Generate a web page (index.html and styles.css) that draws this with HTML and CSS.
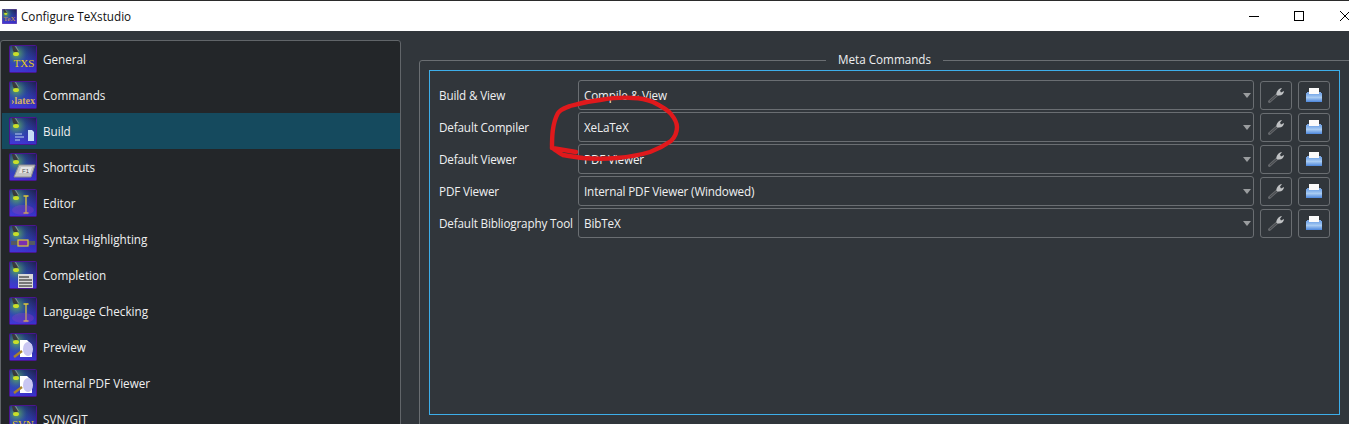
FILE: index.html
```html
<!DOCTYPE html>
<html lang="en">
<head>
    <meta charset="UTF-8">
    <meta name="viewport" content="width=device-width, initial-scale=1.0">
    <title>Configure TeXstudio</title>
    <link rel="stylesheet" href="styles.css">
</head>
<body>
    <svg class="defs" width="0" height="0">
        <defs>
            <linearGradient id="tile" x1="0.6" y1="0" x2="0.4" y2="1">
                <stop offset="0" stop-color="#14204a"/>
                <stop offset="0.5" stop-color="#2330a0"/>
                <stop offset="1" stop-color="#3a34dc"/>
            </linearGradient>
            <radialGradient id="beam" cx="0.25" cy="0.3" r="0.8">
                <stop offset="0" stop-color="#6fd04a" stop-opacity="0.8"/>
                <stop offset="0.5" stop-color="#3a70b0" stop-opacity="0.35"/>
                <stop offset="1" stop-color="#7030c0" stop-opacity="0.1"/>
            </radialGradient>
            <linearGradient id="tray" x1="0" y1="0" x2="0" y2="1">
                <stop offset="0" stop-color="#6a9fe6"/>
                <stop offset="0.5" stop-color="#a8cbf2"/>
                <stop offset="1" stop-color="#4c86dc"/>
            </linearGradient>
            <symbol id="tile-base" viewBox="0 0 28 28">
                <rect x="0.5" y="0.5" width="27" height="27" rx="1" fill="url(#tile)" stroke="#4a1590"/>
                <rect x="1" y="1" width="26" height="26" fill="url(#beam)"/>
                <path d="M3 1 L5 1 L9 6 L7 9 L4 6 Z" fill="#3a3a3a"/>
                <path d="M6.5 1 L9.5 6" stroke="#8a8a8a"/>
                <ellipse cx="7" cy="9" rx="3" ry="2" fill="#c8e02a"/>
            </symbol>
            <symbol id="paper-lens" viewBox="0 0 28 28">
                <path d="M11 7 H18 L23 12 V24 H11 Z" fill="#fff"/>
                <ellipse cx="19" cy="16" rx="5" ry="7" fill="#c9c6f2"/>
                <path d="M5 24 L13 18" stroke="#a8832a" stroke-width="2.4"/>
            </symbol>
            <symbol id="ibeam" viewBox="0 0 28 28">
                <path d="M17 7 V24 M14.5 7 H19.5 M14.5 24 H19.5" stroke="#dcc83a" stroke-width="1.3" fill="none"/>
                <ellipse cx="14" cy="21" rx="11" ry="5" fill="#a040c0" opacity="0.3"/>
            </symbol>
            <symbol id="wrench" viewBox="0 0 16 16">
                <path d="M1.5 14.5 L10 7" stroke="#63666a" stroke-width="3" stroke-linecap="round"/>
                <path d="M2 14 L9.5 7.5" stroke="#3a3d40" stroke-width="0.8"/>
                <path d="M8.5 8 C8 4.5 10.5 1.5 14 1 L12 3.8 L13 5.5 L16 4 C16 7.5 12.5 9.5 8.5 8 Z" fill="#bfc1c3"/>
            </symbol>
            <symbol id="save" viewBox="0 0 16 14">
                <rect x="0" y="5" width="16" height="9" fill="url(#tray)"/>
                <rect x="1" y="4" width="14" height="2" fill="#7ea8e2"/>
                <rect x="3" y="0" width="10" height="6" fill="#fbfbfb"/>
            </symbol>
        </defs>
    </svg>

    <header class="titlebar">
        <svg class="app-icon" viewBox="0 0 28 28">
            <use href="#tile-base"/>
            <text x="14" y="23" class="tile-text tile-text-lg">TeX</text>
        </svg>
        <span class="title">Configure TeXstudio</span>
        <div class="window-controls">
            <svg width="10" height="10" viewBox="0 0 10 10"><path d="M0 5.5 H10" stroke="#000"/></svg>
            <svg width="10" height="10" viewBox="0 0 10 10"><rect x="0.5" y="0.5" width="9" height="9" fill="none" stroke="#000"/></svg>
            <svg width="10" height="10" viewBox="0 0 10 10"><path d="M0 0 L10 10 M10 0 L0 10" stroke="#000"/></svg>
        </div>
    </header>

    <main class="dialog">
        <ul class="nav">
            <li class="nav-item">
                <svg class="nav-icon" viewBox="0 0 28 28"><use href="#tile-base"/><text x="15" y="22" class="tile-text">TXS</text></svg>
                General
            </li>
            <li class="nav-item">
                <svg class="nav-icon" viewBox="0 0 28 28"><use href="#tile-base"/><text x="14" y="23" class="tile-text tile-text-sm">›latex</text></svg>
                Commands
            </li>
            <li class="nav-item active">
                <svg class="nav-icon" viewBox="0 0 28 28">
                    <use href="#tile-base"/>
                    <path d="M6 17 H13 M6 20 H15 M6 23 H11" stroke="#8ea2dc" stroke-width="1.5"/>
                    <path d="M19 13 H23 L25 15 V24 H19 Z" fill="#c6dcf6"/>
                </svg>
                Build
            </li>
            <li class="nav-item">
                <svg class="nav-icon" viewBox="0 0 28 28">
                    <use href="#tile-base"/>
                    <path d="M10 12 H26 L22 24 H5 Z" fill="#c4c4c4" stroke="#8d8d8d"/>
                    <path d="M12 14 H23 L21 20 H10 Z" fill="#e4e4e4"/>
                    <text x="16.5" y="19.5" class="tile-text tile-key">F1</text>
                </svg>
                Shortcuts
            </li>
            <li class="nav-item">
                <svg class="nav-icon" viewBox="0 0 28 28"><use href="#tile-base"/><use href="#ibeam"/></svg>
                Editor
            </li>
            <li class="nav-item">
                <svg class="nav-icon" viewBox="0 0 28 28">
                    <use href="#tile-base"/>
                    <rect x="2" y="16" width="24" height="4" fill="#555a60"/>
                    <rect x="9" y="15" width="10" height="6" fill="#7a2fb0" stroke="#dcc83a" stroke-width="1.2"/>
                </svg>
                Syntax Highlighting
            </li>
            <li class="nav-item">
                <svg class="nav-icon" viewBox="0 0 28 28">
                    <use href="#tile-base"/>
                    <rect x="9" y="13" width="15" height="14" fill="#d9d9d9"/>
                    <path d="M10 16 H20 M10 19 H23 M10 22 H23 M10 25 H23" stroke="#555" stroke-width="1.4"/>
                </svg>
                Completion
            </li>
            <li class="nav-item">
                <svg class="nav-icon" viewBox="0 0 28 28"><use href="#tile-base"/><use href="#ibeam"/></svg>
                Language Checking
            </li>
            <li class="nav-item">
                <svg class="nav-icon" viewBox="0 0 28 28"><use href="#tile-base"/><use href="#paper-lens"/></svg>
                Preview
            </li>
            <li class="nav-item">
                <svg class="nav-icon" viewBox="0 0 28 28"><use href="#tile-base"/><use href="#paper-lens"/></svg>
                Internal PDF Viewer
            </li>
            <li class="nav-item">
                <svg class="nav-icon" viewBox="0 0 28 28"><use href="#tile-base"/><text x="14" y="23" class="tile-text">SVN</text></svg>
                SVN/GIT
            </li>
        </ul>

        <fieldset class="group">
            <legend>Meta Commands</legend>
            <div class="panel">
                <div class="row">
                    <label>Build &amp; View</label>
                    <div class="combo">Compile &amp; View</div>
                    <button class="tool"><svg width="16" height="16"><use href="#wrench"/></svg></button>
                    <button class="tool"><svg width="16" height="14"><use href="#save"/></svg></button>
                </div>
                <div class="row">
                    <label>Default Compiler</label>
                    <div class="combo">XeLaTeX</div>
                    <button class="tool"><svg width="16" height="16"><use href="#wrench"/></svg></button>
                    <button class="tool"><svg width="16" height="14"><use href="#save"/></svg></button>
                </div>
                <div class="row">
                    <label>Default Viewer</label>
                    <div class="combo">PDF Viewer</div>
                    <button class="tool"><svg width="16" height="16"><use href="#wrench"/></svg></button>
                    <button class="tool"><svg width="16" height="14"><use href="#save"/></svg></button>
                </div>
                <div class="row">
                    <label>PDF Viewer</label>
                    <div class="combo">Internal PDF Viewer (Windowed)</div>
                    <button class="tool"><svg width="16" height="16"><use href="#wrench"/></svg></button>
                    <button class="tool"><svg width="16" height="14"><use href="#save"/></svg></button>
                </div>
                <div class="row">
                    <label>Default Bibliography Tool</label>
                    <div class="combo">BibTeX</div>
                    <button class="tool"><svg width="16" height="16"><use href="#wrench"/></svg></button>
                    <button class="tool"><svg width="16" height="14"><use href="#save"/></svg></button>
                </div>
            </div>
        </fieldset>
    </main>

    <!-- red marker circle drawn over the screenshot -->
    <svg class="marker" width="1349" height="424" viewBox="0 0 1349 424">
        <path d="M552 148 C552 138 552 124 558 113 C562 108 566 108 570 106 C580 103 590 101 600 100 C612 98 622 97 633 98 C642 98 648 100 653 102 C661 106 667 109 671 114 C675 119 677 123 677 127 C677 133 675 137 671 141 C664 146 658 149 650 152 C640 155 628 157 617 158 C606 159 594 159 583 158 C575 157 569 156 563 155 C559 153 555 150 552 148 L576 152" fill="none" stroke="#e0191c" stroke-width="4.4" stroke-linecap="round" stroke-linejoin="round"/>
    </svg>
</body>
</html>
```

FILE: styles.css
```css
html, body {
    height: 100%;
}
body {
    margin: 0;
    overflow: hidden;
    background-color: #31363b;
    color: #eff0f1;
    font-family: "Open Sans", "Noto Sans", sans-serif;
    font-size: 11.7px;
}
.defs {
    display: block;
}
.titlebar {
    height: 30px;
    border-top: 1px solid #2b2b2b;
    background: white;
    color: #111;
    display: flex;
    align-items: center;
}
.app-icon {
    width: 15px;
    height: 15px;
    margin: 0 4px 0 2px;
}
.window-controls {
    margin-left: auto;
    display: flex;
    gap: 35px;
    margin-right: -1px;
}
.window-controls svg:last-child {
    margin-left: 1px;
}
.dialog {
    display: flex;
    gap: 18px;
    padding-top: 9px;
    width: 1400px;
}
.nav {
    list-style: none;
    margin: 0;
    padding: 0 0 0 1px;
    width: 398px;
    height: 500px;
    background: #232629;
    border: 1px solid #616569;
    border-radius: 3px;
    flex: none;
}
.nav-item {
    height: 36px;
    display: flex;
    align-items: center;
    gap: 6px;
    padding-left: 7px;
}
.nav-item.active {
    background: #154a5e;
}
.nav-icon {
    width: 28px;
    height: 28px;
    flex: none;
}
.tile-text {
    font-family: "Liberation Serif", serif;
    font-size: 11px;
    fill: #e6c81e;
    text-anchor: middle;
}
.tile-text-sm {
    font-size: 10px;
    font-weight: bold;
    fill: #d8b060;
}
.tile-text-lg {
    font-size: 13px;
    fill: #d89a4a;
}
.tile-key {
    font-family: "Liberation Sans", sans-serif;
    font-size: 6px;
    fill: #555;
}
.group {
    flex: none;
    box-sizing: border-box;
    width: 940px;
    height: 420px;
    margin: 12px 0 0;
    padding: 2px 18px 0 9px;
    border: 1px solid #6a6e72;
    border-radius: 3px;
    min-width: 0;
}
.group legend {
    margin: 0 auto;
    padding: 0 12px 2px;
    line-height: 14px;
}
.panel {
    box-sizing: border-box;
    height: 345px;
    border: 1px solid #3daee9;
    padding: 9px 9px 0;
    display: flex;
    flex-direction: column;
    gap: 2px;
}
.row {
    height: 30px;
    display: flex;
    align-items: center;
    gap: 6px;
    letter-spacing: -0.15px;
}
.row label {
    width: 133px;
    flex: none;
    white-space: nowrap;
}
.combo {
    flex: 1;
    box-sizing: border-box;
    height: 30px;
    line-height: 29px;
    padding-left: 5px;
    border: 1px solid #6a6e72;
    border-radius: 3px;
    position: relative;
}
.combo::after {
    content: "";
    position: absolute;
    right: 2px;
    top: 12px;
    border-left: 4px solid transparent;
    border-right: 4px solid transparent;
    border-top: 5px solid #9a9d9f;
}
.tool {
    box-sizing: border-box;
    width: 32px;
    height: 29px;
    padding: 0;
    background: none;
    border: 1px solid #6a6e72;
    border-radius: 3px;
    display: flex;
    align-items: center;
    justify-content: center;
}
.marker {
    position: absolute;
    left: 0;
    top: 0;
    pointer-events: none;
}
```
